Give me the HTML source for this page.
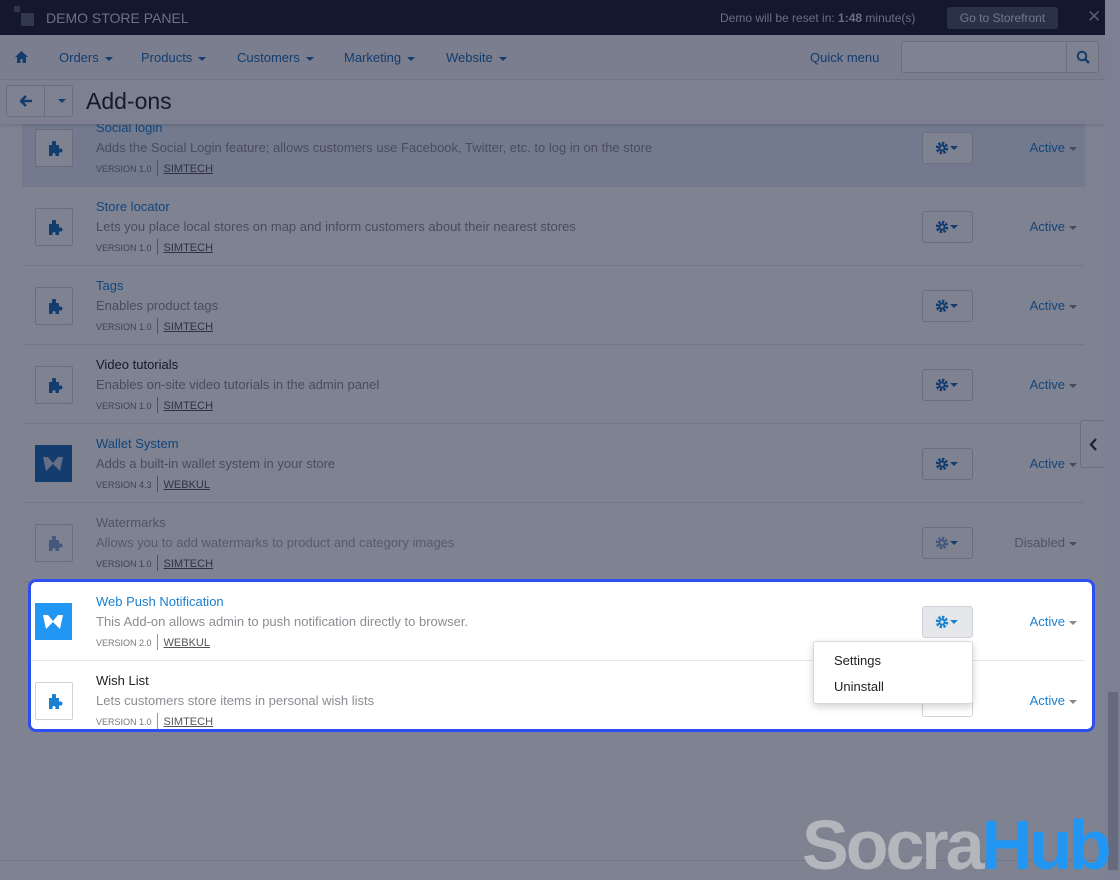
<!DOCTYPE html>
<html><head><meta charset="utf-8"><style>
*{box-sizing:border-box;margin:0;padding:0}
body{width:1120px;height:880px;overflow:hidden;background:#fff;font-family:"Liberation Sans",sans-serif;position:relative}
.top{position:absolute;left:0;top:0;width:1105px;height:35px;background:#1a1f30;color:#cfd3dc}
.nav{position:absolute;left:0;top:35px;width:1105px;height:45px;background:#f5f6f8;border-bottom:1px solid #e3e5ea}
.nav span{position:absolute;top:15px;font-size:13px;color:#1a6cb5}
.tb{position:absolute;left:0;top:80px;width:1105px;height:44px;background:#fbfbfc;box-shadow:0 2px 3px rgba(0,0,0,.12);z-index:2}
.row{position:absolute;left:22px;width:1063px;height:79px;border-bottom:1px solid #e5e7eb;background:#fff}
.ic{position:absolute;left:13px;top:21px;width:38px;height:38px;border:1px solid #cfd3d9;border-radius:2px;background:#fff}
.ic svg{position:absolute;left:11px;top:11px}
.wk{position:absolute;left:13px;top:21px;width:37px;height:37px;background:#2196f3}
.t{position:absolute;left:74px;top:12px;font-size:13px;color:#1a80d0}
.d{position:absolute;left:74px;top:32px;font-size:13px;color:#8a8d92}
.v{position:absolute;left:74px;top:55px;font-size:9px;color:#777}
.v u{font-size:11px;color:#555;margin-left:12px;position:relative}
.v u:before{content:"";position:absolute;left:-7px;top:-3px;height:16px;border-left:1px solid #999}
.g{position:absolute;left:900px;top:24px;width:51px;height:32px;border:1px solid #cfd3d9;border-radius:3px;background:#fff}
.g svg{position:absolute;left:12px;top:8px}
.st{position:absolute;right:8px;top:32px;font-size:13px;color:#1a80d0}
.st:after{content:"";display:inline-block;margin-left:4px;border:4px solid transparent;border-top:4px solid #888;vertical-align:1px;border-bottom:0}
.car:after{content:"";display:inline-block;margin-left:6px;border:4px solid transparent;border-top:4px solid #1a6cb5;vertical-align:1px;border-bottom:0}
.ov{position:absolute;left:0;top:0;width:1105px;height:880px;background:rgba(14,18,48,.53);z-index:5}
.hl{position:absolute;left:28px;top:579px;width:1067px;height:153px;border:3px solid #2d4ff0;border-radius:8px;background:#fff;z-index:6;overflow:hidden}
.menu{position:absolute;left:813px;top:641px;width:160px;height:63px;background:#fff;border:1px solid #d6d8dc;border-radius:3px;box-shadow:0 3px 8px rgba(0,0,0,.18);z-index:8;font-size:13px;color:#222}
.sb{position:absolute;left:1105px;top:0;width:15px;height:880px;background:#7c8093;z-index:7}
.wm{position:absolute;left:802px;top:810px;font:bold 70px "Liberation Sans",sans-serif;letter-spacing:-3px;z-index:9;line-height:70px;white-space:nowrap}
</style></head><body>
<div class="top">
 <div style="position:absolute;left:14px;top:6px;width:6px;height:6px;background:#555b6e"></div>
 <div style="position:absolute;left:21px;top:13px;width:13px;height:13px;background:#5a6073"></div>
 <div style="position:absolute;left:46px;top:10px;font-size:14px;color:#d5d9e2">DEMO STORE PANEL</div>
 <div style="position:absolute;left:720px;top:11px;font-size:12px">Demo will be reset in: <b>1:48</b> minute(s)</div>
 <div style="position:absolute;left:947px;top:7px;width:111px;height:22px;background:#4d5467;border-radius:3px;font-size:12px;text-align:center;line-height:22px;color:#e2e5ec">Go to Storefront</div>
 <div style="position:absolute;left:1087px;top:7px;font-size:17px;color:#aab">✕</div>
</div>
<div class="nav">
 <svg style="position:absolute;left:15px;top:16px" width="13" height="12" viewBox="0 0 13 12"><path d="M6.5 0L0 6h2v6h3.5V8h2v4H11V6h2z" fill="#1a6cb5"/></svg>
 <span style="left:59px" class="car">Orders</span><span style="left:141px" class="car">Products</span><span style="left:237px" class="car">Customers</span><span style="left:344px" class="car">Marketing</span><span style="left:446px" class="car">Website</span>
 <span style="left:810px">Quick menu</span>
 <div style="position:absolute;left:901px;top:6px;width:198px;height:32px;border:1px solid #cfd3d9;border-radius:3px;background:#fff"><div style="position:absolute;left:164px;top:0;width:1px;height:30px;background:#cfd3d9"></div>
 <svg style="position:absolute;left:174px;top:8px" width="14" height="14" viewBox="0 0 14 14"><circle cx="6" cy="6" r="4.3" fill="none" stroke="#1a6cb5" stroke-width="2"/><path d="M9 9l4 4" stroke="#1a6cb5" stroke-width="2.4"/></svg></div>
</div>
<div class="tb">
 <div style="position:absolute;left:6px;top:5px;width:67px;height:32px;border:1px solid #cfd3d9;border-radius:3px;background:#fff"><div style="position:absolute;left:37px;top:0;width:1px;height:30px;background:#cfd3d9"></div>
 <svg style="position:absolute;left:13px;top:9px" width="13" height="12" viewBox="0 0 13 12"><path d="M6 1L1 6l5 5M1 6h11" stroke="#1a6cb5" stroke-width="2.6" fill="none"/></svg>
 <div style="position:absolute;left:51px;top:13px;border:4px solid transparent;border-top-color:#1a6cb5;border-bottom:0"></div></div>
 <div style="position:absolute;left:86px;top:8px;font-size:23px;color:#222">Add-ons</div>
</div>
<div class="row" style="top:108px;background:#e6eef9"><div class="ic"><svg width="16" height="16" viewBox="0 0 16 16"><path d="M2 4h3V1.5a2 2 0 0 1 4 0V4h3v3.5h1.5a2 2 0 0 1 0 4H12V15H8.5v-1.5a1.5 1.5 0 0 0-3 0V15H2z" fill="#1a6cb5"/></svg></div><div class="t">Social login</div><div class="d">Adds the Social Login feature; allows customers use Facebook, Twitter, etc. to log in on the store</div><div class="v">VERSION 1.0<u>SIMTECH</u></div><div class="g"><svg width="26" height="14"><circle cx="7" cy="7" r="4.5" fill="none" stroke="#1a6cb5" stroke-width="3.5" stroke-dasharray="2.2 1.3"/><circle cx="7" cy="7" r="3.5" fill="#1a6cb5"/><circle cx="7" cy="7" r="1.6" fill="#fff"/><path d="M15 5h8l-4 4z" fill="#1a6cb5"/></svg></div><div class="st">Active</div></div>
<div class="row" style="top:187px"><div class="ic"><svg width="16" height="16" viewBox="0 0 16 16"><path d="M2 4h3V1.5a2 2 0 0 1 4 0V4h3v3.5h1.5a2 2 0 0 1 0 4H12V15H8.5v-1.5a1.5 1.5 0 0 0-3 0V15H2z" fill="#1a6cb5"/></svg></div><div class="t">Store locator</div><div class="d">Lets you place local stores on map and inform customers about their nearest stores</div><div class="v">VERSION 1.0<u>SIMTECH</u></div><div class="g"><svg width="26" height="14"><circle cx="7" cy="7" r="4.5" fill="none" stroke="#1a6cb5" stroke-width="3.5" stroke-dasharray="2.2 1.3"/><circle cx="7" cy="7" r="3.5" fill="#1a6cb5"/><circle cx="7" cy="7" r="1.6" fill="#fff"/><path d="M15 5h8l-4 4z" fill="#1a6cb5"/></svg></div><div class="st">Active</div></div>
<div class="row" style="top:266px"><div class="ic"><svg width="16" height="16" viewBox="0 0 16 16"><path d="M2 4h3V1.5a2 2 0 0 1 4 0V4h3v3.5h1.5a2 2 0 0 1 0 4H12V15H8.5v-1.5a1.5 1.5 0 0 0-3 0V15H2z" fill="#1a6cb5"/></svg></div><div class="t">Tags</div><div class="d">Enables product tags</div><div class="v">VERSION 1.0<u>SIMTECH</u></div><div class="g"><svg width="26" height="14"><circle cx="7" cy="7" r="4.5" fill="none" stroke="#1a6cb5" stroke-width="3.5" stroke-dasharray="2.2 1.3"/><circle cx="7" cy="7" r="3.5" fill="#1a6cb5"/><circle cx="7" cy="7" r="1.6" fill="#fff"/><path d="M15 5h8l-4 4z" fill="#1a6cb5"/></svg></div><div class="st">Active</div></div>
<div class="row" style="top:345px"><div class="ic"><svg width="16" height="16" viewBox="0 0 16 16"><path d="M2 4h3V1.5a2 2 0 0 1 4 0V4h3v3.5h1.5a2 2 0 0 1 0 4H12V15H8.5v-1.5a1.5 1.5 0 0 0-3 0V15H2z" fill="#1a6cb5"/></svg></div><div class="t" style="color:#222">Video tutorials</div><div class="d">Enables on-site video tutorials in the admin panel</div><div class="v">VERSION 1.0<u>SIMTECH</u></div><div class="g"><svg width="26" height="14"><circle cx="7" cy="7" r="4.5" fill="none" stroke="#1a6cb5" stroke-width="3.5" stroke-dasharray="2.2 1.3"/><circle cx="7" cy="7" r="3.5" fill="#1a6cb5"/><circle cx="7" cy="7" r="1.6" fill="#fff"/><path d="M15 5h8l-4 4z" fill="#1a6cb5"/></svg></div><div class="st">Active</div></div>
<div class="row" style="top:424px"><div class="wk" style="background:#1a6cb5"><svg width="37" height="37" viewBox="0 0 37 37"><path d="M8 12h5l5 6 5-6h5l-3 14-7-7-7 7z" fill="#c9d4e6"/></svg></div><div class="t">Wallet System</div><div class="d">Adds a built-in wallet system in your store</div><div class="v">VERSION 4.3<u>WEBKUL</u></div><div class="g"><svg width="26" height="14"><circle cx="7" cy="7" r="4.5" fill="none" stroke="#1a6cb5" stroke-width="3.5" stroke-dasharray="2.2 1.3"/><circle cx="7" cy="7" r="3.5" fill="#1a6cb5"/><circle cx="7" cy="7" r="1.6" fill="#fff"/><path d="M15 5h8l-4 4z" fill="#1a6cb5"/></svg></div><div class="st">Active</div></div>
<div class="row" style="top:503px"><div class="ic"><svg width="16" height="16" viewBox="0 0 16 16"><path d="M2 4h3V1.5a2 2 0 0 1 4 0V4h3v3.5h1.5a2 2 0 0 1 0 4H12V15H8.5v-1.5a1.5 1.5 0 0 0-3 0V15H2z" fill="#7fa6d2"/></svg></div><div class="t" style="color:#9a9ca0">Watermarks</div><div class="d" style="color:#a8aaae">Allows you to add watermarks to product and category images</div><div class="v">VERSION 1.0<u>SIMTECH</u></div><div class="g"><svg width="26" height="14"><circle cx="7" cy="7" r="4.5" fill="none" stroke="#7fa6d2" stroke-width="3.5" stroke-dasharray="2.2 1.3"/><circle cx="7" cy="7" r="3.5" fill="#7fa6d2"/><circle cx="7" cy="7" r="1.6" fill="#fff"/><path d="M15 5h8l-4 4z" fill="#1a6cb5"/></svg></div><div class="st" style="color:#9a9ca0">Disabled</div></div>
<div style="position:absolute;left:1080px;top:420px;width:26px;height:48px;border:1px solid #cfd3d9;border-right:0;border-radius:3px 0 0 3px;background:#fff;z-index:3"><svg style="position:absolute;left:8px;top:17px" width="9" height="13"><path d="M7 1L2 6.5 7 12" stroke="#333" stroke-width="2.4" fill="none"/></svg></div>
<div style="position:absolute;left:0;top:860px;width:1105px;height:1px;background:#e8e9ec"></div>
<div class="ov"></div>
<div class="hl">
 <div class="row" style="left:-9px;top:0"><div class="wk"><svg width="37" height="37" viewBox="0 0 37 37"><path d="M8 12h5l5 6 5-6h5l-3 14-7-7-7 7z" fill="#fff"/></svg></div><div class="t">Web Push Notification</div><div class="d">This Add-on allows admin to push notification directly to browser.</div><div class="v">VERSION 2.0<u>WEBKUL</u></div><div class="g" style="background:#e6e7ea"><svg width="26" height="14"><circle cx="7" cy="7" r="4.5" fill="none" stroke="#1a80d0" stroke-width="3.5" stroke-dasharray="2.2 1.3"/><circle cx="7" cy="7" r="3.5" fill="#1a80d0"/><circle cx="7" cy="7" r="1.6" fill="#e6e7ea"/><path d="M15 5h8l-4 4z" fill="#1a80d0"/></svg></div><div class="st">Active</div></div>
 <div class="row" style="left:-9px;top:79px"><div class="ic"><svg width="16" height="16" viewBox="0 0 16 16"><path d="M2 4h3V1.5a2 2 0 0 1 4 0V4h3v3.5h1.5a2 2 0 0 1 0 4H12V15H8.5v-1.5a1.5 1.5 0 0 0-3 0V15H2z" fill="#1a80d0"/></svg></div><div class="t" style="color:#222">Wish List</div><div class="d">Lets customers store items in personal wish lists</div><div class="v">VERSION 1.0<u>SIMTECH</u></div><div class="g"></div><div class="st">Active</div></div>
</div>
<div class="menu"><div style="position:absolute;left:20px;top:11px">Settings</div><div style="position:absolute;left:20px;top:37px">Uninstall</div></div>
<div class="sb"><div style="position:absolute;left:3px;top:692px;width:10px;height:178px;background:#666a7f"></div></div>
<div class="wm"><span style="color:#b4b6bc">Socra</span><span style="color:#2196f3">Hub</span></div>
</body></html>
